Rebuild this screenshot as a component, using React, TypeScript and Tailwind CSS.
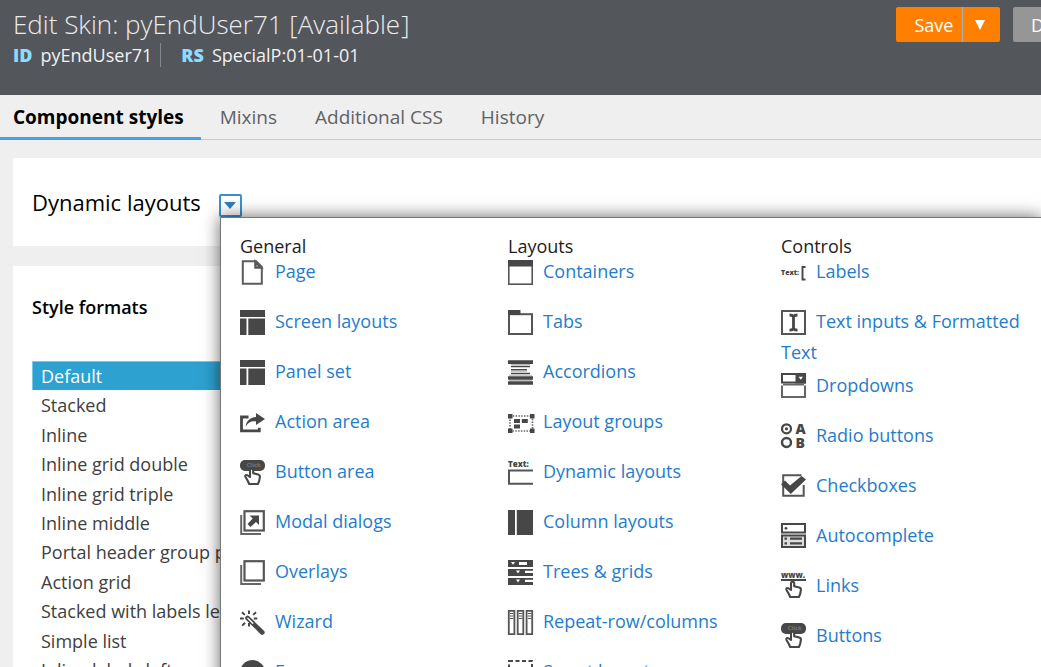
import type { ReactNode } from 'react';
import clsx from 'clsx';

const INK = '#474747';

function Icon({ children }: { children: ReactNode }) {
  return (
    <svg
      viewBox="0 0 25 25"
      fill={INK}
      aria-hidden="true"
      className="mr-2.5 mb-0.5 inline-block size-[25px] overflow-visible align-middle font-['Open_Sans',sans-serif]"
    >
      {children}
    </svg>
  );
}

const HAND =
  'M10 17V10.500c0-2.300 3.200-2.300 3.200 0v2.700l5 1.200c1.300.4 1.900 1.200 1.700 2.500l-.7 4-1.300 3.100H9.200l-1.200-2.700-2.500-4.300c-.8-1.700.8-2.700 2.300-1.500z';

const pointer = (
  <path d={HAND} fill="#fff" stroke={INK} strokeWidth="2.1" strokeLinejoin="round" />
);

const icons: Record<string, ReactNode> = {
  page: (
    <>
      <path d="M2.800 1.200h13.400l5.600 5.600v17H2.800z" fill="#fff" stroke="#5c5c5c" strokeWidth="2" />
      <path d="M15 1v7h7z" stroke="#5c5c5c" strokeWidth="1.600" />
      <path d="M16.500 4.500v2h2z" fill="#ccc" />
    </>
  ),
  panels: <path d="M0 0h25v7H0zM0 8.500h6.500V25H0zM8.300 8.500H25V25H8.300z" />,
  share: (
    <>
      <path d="M8.500 7H1.500v13.800h17.800v-3" fill="none" stroke={INK} strokeWidth="2.800" />
      <path d="M16 3l9 6-9 6v-3.500c-4.500-.6-8 .9-10.300 5.200C6.300 11 9.800 7.500 16 7z" />
    </>
  ),
  press: (
    <>
      <rect y="0" width="25" height="11" rx="5" />
      <text x="6.500" y="7" fontSize="6" fontWeight="700" fill="#777">Click</text>
      {pointer}
    </>
  ),
  modal: (
    <>
      <path d="M1.200 5v19H21" fill="none" stroke="#666" strokeWidth="2" />
      <rect x="4.500" y="1.200" width="19.300" height="19.300" fill="#fff" stroke="#555" strokeWidth="2.200" />
      <path d="M9.500 5.500H19V15l-3-3-5.500 5-3-3 5.200-5.500z" />
    </>
  ),
  overlay: (
    <>
      <path d="M1.200 5v19H21" fill="none" stroke="#666" strokeWidth="2" />
      <rect x="4.500" y="1.200" width="19.300" height="19.300" fill="#fff" stroke="#555" strokeWidth="2.200" />
    </>
  ),
  wand: (
    <>
      <path d="M7.500 8l14.800 14.500" stroke={INK} strokeWidth="4.600" strokeLinecap="round" />
      <path d="M7.800 8.200l5 5" stroke="#fff" strokeWidth="1.300" strokeLinecap="round" />
      <path
        d="M9 .5v3.600M2 2.200l2.800 2.700M16 2.200l-2.800 2.700M0 8.600h3.800M13.800 8.600h3.500M2.200 15.600L5 12.800M9 13v3.500"
        stroke={INK}
        strokeWidth="2"
      />
    </>
  ),
  error: (
    <>
      <circle cx="12.500" cy="12.500" r="12.500" />
      <path d="M8 8l9 9M17 8l-9 9" stroke="#fff" strokeWidth="2.500" />
    </>
  ),
  container: (
    <>
      <rect x=".8" y=".8" width="23.400" height="23.400" fill="#fff" stroke="#555" strokeWidth="1.600" />
      <path d="M0 0h25v6.500H0z" />
    </>
  ),
  tab: (
    <>
      <rect x="1" y="4.200" width="23" height="19.800" fill="#fff" stroke="#555" strokeWidth="2" />
      <path d="M0 0h12.500v5H0z" />
    </>
  ),
  accordion: (
    <>
      <path d="M0 .3h25v3.600H0zM0 16.300h25v3.400H0zM0 21.300h25v3.500H0z" />
      <path d="M3 5.800h19v1.400H3zM3 9h16v1.400H3zM3 12.800h19v1.500H3z" />
      <path d="M3 3.900h19v1.300H3zM3 10.800h16v1H3zM1 14.800h23v1H1zM1 19.900h23v1H1z" fill="#bbb" />
    </>
  ),
  group: (
    <>
      <rect x="2" y="6" width="22.500" height="15" fill="none" stroke="#666" strokeWidth="1.600" strokeDasharray="1.500 1.300" />
      <path d="M0 4h4.500v4.500H0zM22 4h4.500v4.500H22zM0 18.500h4.500V23H0zM22 18.500h4.500V23H22z" />
      <path d="M6 9h6v4H6zM13.800 9h6v4h-6zM6 14.500h6v4H6z" />
    </>
  ),
  dynamic: (
    <>
      <text x="0" y="6.500" fontSize="8" fontWeight="800">Text:</text>
      <path d="M25 10.500H1v13.300h24" fill="none" stroke="#555" strokeWidth="2" />
    </>
  ),
  column: <path d="M0 0h7v25H0zM8.800 0H25v25H8.800z" />,
  tree: (
    <>
      <path d="M0 0h25v7H0zM0 9h25v7H0zM0 18h25v7H0z" />
      <path d="M3 2h4L5 4.800zM11 2h8v3h-8zM8 10.500h4l-2 3zM17 10.800h8V13h-8zM8 19.500h4l-2 3zM17 19.800h8V22h-8z" fill="#fff" />
    </>
  ),
  repeat: (
    <g stroke="#555">
      <path d="M.8.8h5.600v23.400H.8zM9.700.8h5.600v23.400H9.700zM18.600.8h5.600v23.400h-5.600z" fill="#fff" strokeWidth="1.800" />
      <path d="M2 3.500h3.500M11 3.500h3.500M20 3.500h3.500M2 6h3.500M11 6h3.500M20 6h3.500M2 8.500h3.500M11 8.500h3.500M20 8.500h3.500" />
    </g>
  ),
  smart: (
    <rect x="1" y="1" width="23" height="23" fill="none" stroke={INK} strokeWidth="2" strokeDasharray="4 2.500" />
  ),
  label: (
    <>
      <text x="0" y="15" fontSize="7" fontWeight="800">Text:</text>
      <path d="M24.500 7H21.500v12.500h3" fill="none" stroke={INK} strokeWidth="1.900" />
    </>
  ),
  input: (
    <>
      <rect x="1" y="1" width="23" height="23" fill="#fff" stroke="#555" strokeWidth="2" />
      <path
        d="M8.500 5c2 0 3.200.5 4 1.600C13.300 5.500 14.500 5 16.500 5M8.500 20.200c2 0 3.200-.5 4-1.600.8 1.100 2 1.600 4 1.600M12.500 6v13"
        fill="none"
        stroke={INK}
        strokeWidth="2.800"
      />
    </>
  ),
  dropdown: (
    <>
      <rect x="1" y="1" width="23" height="8.500" fill="#fff" stroke={INK} strokeWidth="2" />
      <path d="M14.500 0H25v10.500H14.500z" />
      <path d="M17.500 3.800h4.500l-2.200 3z" fill="#fff" />
      <path d="M1 12.500V24h23V12.500M2 11.500h21" fill="none" stroke="#666" strokeWidth="2" />
    </>
  ),
  radio: (
    <>
      <circle cx="5.500" cy="5.800" r="4.500" fill="none" stroke={INK} strokeWidth="2.200" />
      <circle cx="5.500" cy="5.800" r="1.600" />
      <circle cx="5.500" cy="19.500" r="4.500" fill="none" stroke={INK} strokeWidth="2.400" />
      <text x="14.500" y="10.800" fontSize="14" fontWeight="800">A</text>
      <text x="14.500" y="24.800" fontSize="14" fontWeight="800">B</text>
    </>
  ),
  check: (
    <>
      <path d="M20.500 2.200H2.200v20.500h20.500V12" fill="none" stroke="#555" strokeWidth="2" />
      <path d="M0 11.300L4 7.500l5 5L20.500 3 25 6.500 9.800 21z" />
    </>
  ),
  autocomplete: (
    <>
      <rect x="1" y="1" width="23" height="8.500" fill="#fff" stroke={INK} strokeWidth="2" />
      <circle cx="5" cy="5.300" r="1.400" />
      <rect x="1" y="12.500" width="23" height="11.500" fill="#ddd" stroke={INK} strokeWidth="2" />
      <path d="M9 14.500h12v2.200H9zM9 19.300h12v2.200H9zM3.500 14.500H6v2.200H3.500zM3.500 19.300H6v2.200H3.500z" />
    </>
  ),
  link: (
    <>
      <text x="0" y="5" fontSize="8" fontWeight="800">www.</text>
      <path d="M0 6h25v2H0z" />
      {pointer}
    </>
  ),
};

type Item = { label: string; icon: string };

const columns: { title: string; items: Item[] }[] = [
  {
    title: 'General',
    items: [
      { label: 'Page', icon: 'page' },
      { label: 'Screen layouts', icon: 'panels' },
      { label: 'Panel set', icon: 'panels' },
      { label: 'Action area', icon: 'share' },
      { label: 'Button area', icon: 'press' },
      { label: 'Modal dialogs', icon: 'modal' },
      { label: 'Overlays', icon: 'overlay' },
      { label: 'Wizard', icon: 'wand' },
      { label: 'Errors', icon: 'error' },
    ],
  },
  {
    title: 'Layouts',
    items: [
      { label: 'Containers', icon: 'container' },
      { label: 'Tabs', icon: 'tab' },
      { label: 'Accordions', icon: 'accordion' },
      { label: 'Layout groups', icon: 'group' },
      { label: 'Dynamic layouts', icon: 'dynamic' },
      { label: 'Column layouts', icon: 'column' },
      { label: 'Trees & grids', icon: 'tree' },
      { label: 'Repeat-row/columns', icon: 'repeat' },
      { label: 'Smart layouts', icon: 'smart' },
    ],
  },
  {
    title: 'Controls',
    items: [
      { label: 'Labels', icon: 'label' },
      { label: 'Text inputs & Formatted Text', icon: 'input' },
      { label: 'Dropdowns', icon: 'dropdown' },
      { label: 'Radio buttons', icon: 'radio' },
      { label: 'Checkboxes', icon: 'check' },
      { label: 'Autocomplete', icon: 'autocomplete' },
      { label: 'Links', icon: 'link' },
      { label: 'Buttons', icon: 'press' },
    ],
  },
];

const tabs = ['Component styles', 'Mixins', 'Additional CSS', 'History'];

const formats = [
  'Default',
  'Stacked',
  'Inline',
  'Inline grid double',
  'Inline grid triple',
  'Inline middle',
  'Portal header group page',
  'Action grid',
  'Stacked with labels left',
  'Simple list',
  'Inline labels left',
];

function Header() {
  return (
    <header className="flex h-[95px] justify-between overflow-hidden bg-[#53565b] pl-[13px] text-white">
      <div className="pt-1.5 whitespace-nowrap">
        <h1 className="text-[26px] leading-9 font-light text-[#ececec]">
          Edit Skin: pyEndUser71 [Available<span className="ml-px">]</span>
        </h1>
        <div className="mt-px flex h-6 items-center text-lg text-[#f2f2f2]">
          <span className="mr-2 font-extrabold text-[#8edcff]">ID</span>
          <span className="mr-2">pyEndUser71</span>
          <span className="mr-5 h-6 w-px bg-[#85888c]" />
          <span className="mr-2 font-extrabold text-[#8edcff]">RS</span>
          <span>SpecialP:01-01-01</span>
        </div>
      </div>
      <div className="mt-[7px] flex h-[35px] w-[145px] shrink-0 overflow-hidden text-lg">
        <button type="button" className="w-[66px] shrink-0 rounded-l-xs bg-[#ff8000] pl-2.5">
          Save
        </button>
        <button
          type="button"
          aria-label="More save options"
          className="flex w-[38px] shrink-0 items-center justify-center rounded-r-xs border-l border-[#a8b0b8] bg-[#ff8000] pr-1"
        >
          <svg viewBox="0 0 10 10" className="size-2.5 fill-white">
            <path d="M0 0h10L5 10z" />
          </svg>
        </button>
        <button type="button" className="ml-[13px] shrink-0 rounded-xs bg-[#969696] px-[18px]">
          Delete
        </button>
      </div>
    </header>
  );
}

function Tabs() {
  return (
    <nav className="flex h-[45px] border-b border-[#cbcbcb] text-[19px]">
      {tabs.map((tab, i) => (
        <button
          key={tab}
          type="button"
          className={clsx(
            '-mb-px border-b-3 pt-[3px] whitespace-nowrap',
            i === 0
              ? 'border-[#46a2e2] pr-[17px] pl-[13px] font-bold text-black'
              : 'border-transparent px-[19px] text-[#606266]',
          )}
        >
          {tab}
        </button>
      ))}
    </nav>
  );
}

function ComponentMenu() {
  return (
    <div className="absolute top-[59px] right-0 left-[207px] z-10 grid grid-cols-[268px_273px_1fr] border-t border-l border-[#777] bg-white pt-[18px] pl-[19px] shadow-[0_0_16px_rgba(0,0,0,0.6)]">
      {columns.map(column => (
        <section key={column.title}>
          <h3 className="leading-5 text-[#222]">{column.title}</h3>
          <ul>
            {column.items.map(item => (
              <li key={item.label} className="min-h-[50px] pb-[3px] leading-[30px]">
                <a href="#" className="text-[#1f7dcb]">
                  <Icon>{icons[item.icon]}</Icon>
                  {item.label}
                </a>
              </li>
            ))}
          </ul>
        </section>
      ))}
    </div>
  );
}

function StyleFormats() {
  return (
    <section className="mt-5 bg-white pt-[27px] pb-8 pl-[19px]">
      <h2 className="leading-7 font-semibold text-black">Style formats</h2>
      <ul className="mt-10 grid h-[324px] w-[280px] auto-rows-fr">
        {formats.map((format, i) => (
          <li key={format}>
            <button
              type="button"
              className={clsx(
                'h-full w-full text-left whitespace-nowrap',
                i === 0
                  ? 'border-t border-l border-[#7cc8e4] bg-[#2da1cf] pl-2 text-white'
                  : 'pl-[9px] text-[#404040]',
              )}
            >
              {format}
            </button>
          </li>
        ))}
      </ul>
    </section>
  );
}

export default function App() {
  return (
    <div className="h-screen overflow-hidden bg-[#efefef] font-['Open_Sans','Noto_Sans',sans-serif] text-lg">
      <Header />
      <Tabs />
      <main className="pt-[18px] pl-[13px]">
        <section className="relative flex h-[88px] items-center bg-white pl-[19px]">
          <h2 className="text-[22px] text-black">Dynamic layouts</h2>
          <button
            type="button"
            aria-label="Choose component"
            aria-expanded="true"
            className="mt-1.5 ml-[18px] flex size-[23px] items-center justify-center rounded-xs border-2 border-[#3d90cf] bg-white"
          >
            <svg viewBox="0 0 12 7" className="h-[7px] w-3 fill-[#2d7fc0]">
              <path d="M0 0h12L6 7z" />
            </svg>
          </button>
          <ComponentMenu />
        </section>
        <StyleFormats />
      </main>
    </div>
  );
}
